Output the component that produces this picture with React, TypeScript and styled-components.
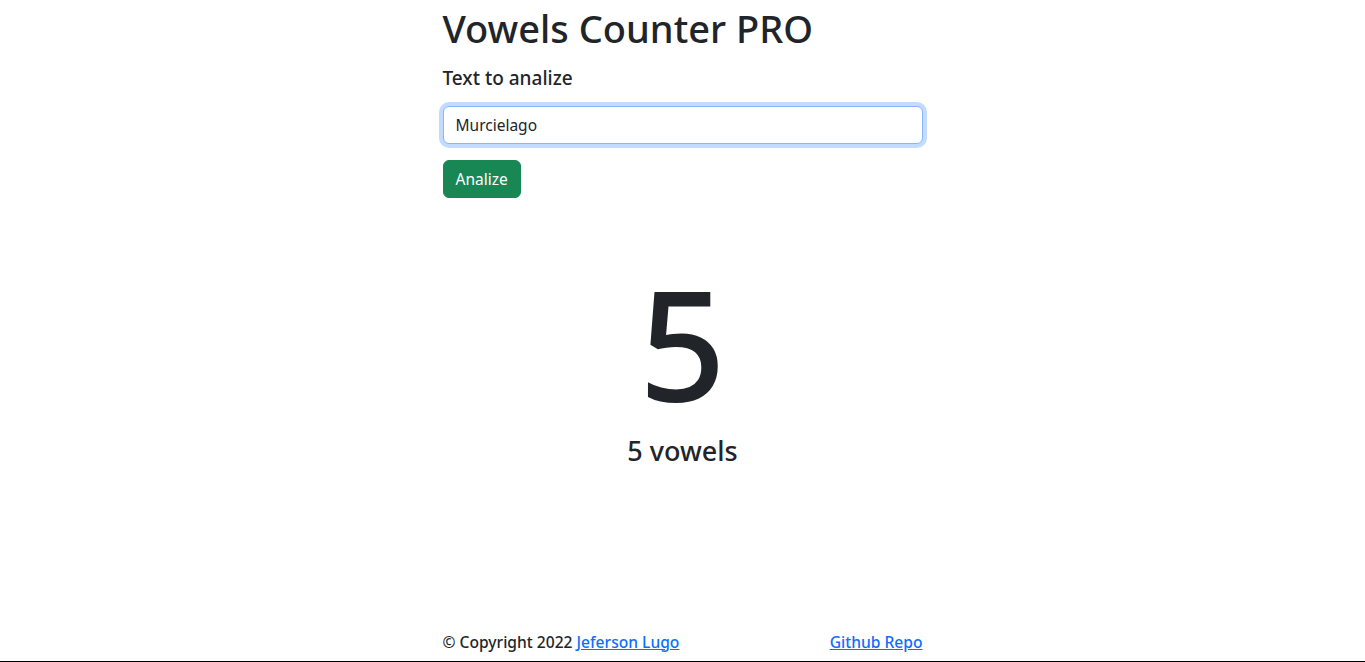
import React, { useState } from "react";
import styled, { createGlobalStyle } from "styled-components";

const GlobalStyle = createGlobalStyle`
  * { box-sizing: border-box; }
  body {
    margin: 0;
    font-family: "Noto Sans", "Open Sans", sans-serif;
    font-size: 16px;
    line-height: 1.5;
    color: #212529;
    background: #fff;
  }
`;

const Page = styled.div`
  height: 100vh;
  display: flex;
  flex-direction: column;
  border-bottom: 1px solid #000;
`;

const Container = styled.main`
  width: 480px;
  margin: 0 auto;
  flex: 1;
  display: flex;
  flex-direction: column;
`;

const Title = styled.h1`
  margin: 0 0 8px;
  padding-top: 6px;
  font-size: 38px;
  font-weight: 500;
  line-height: 1.2;
`;

const Label = styled.label`
  display: block;
  margin: 0 0 8px;
  padding-top: 7px;
  font-size: 19px;
  font-weight: 500;
  line-height: 1.2;
`;

const Input = styled.input`
  display: block;
  width: 100%;
  height: 38px;
  margin-top: 9px;
  padding: 6px 12px;
  font: inherit;
  font-size: 15.5px;
  color: #212529;
  border: 1px solid #86b7fe;
  border-radius: 6px;
  outline: 0;
  box-shadow: 0 0 0 4px rgba(13, 110, 253, 0.25);
`;

const Button = styled.button`
  align-self: flex-start;
  margin-top: 16px;
  height: 38px;
  padding: 6px 12px;
  font: inherit;
  font-size: 15.5px;
  color: #fff;
  background: #198754;
  border: 1px solid #198754;
  border-radius: 6px;
`;

const Result = styled.section`
  margin-top: 69px;
  text-align: center;
`;

const Count = styled.div`
  font-size: 152px;
  font-weight: 500;
  line-height: 1;
`;

const Caption = styled.h3`
  margin: 16px 0 0;
  font-size: 27px;
  font-weight: 500;
  line-height: 1.2;
`;

const Footer = styled.footer`
  margin-top: auto;
  padding-bottom: 7px;
  display: flex;
  justify-content: space-between;
  font-size: 15.6px;
  font-weight: 500;
`;

const Link = styled.a`
  color: #0d6efd;
  text-decoration: underline;
`;

function countVowels(text: string) {
  return (text.match(/[aeiouáéíóú]/gi) || []).length;
}

export default function App() {
  const [text, setText] = useState("Murcielago");
  const total = countVowels(text);

  return (
    <>
      <GlobalStyle />
      <Page>
        <Container>
          <Title>Vowels Counter PRO</Title>
          <Label htmlFor="text">Text to analize</Label>
          <Input
            id="text"
            value={text}
            onChange={(e) => setText(e.target.value)}
          />
          <Button>Analize</Button>
          <Result>
            <Count>{total}</Count>
            <Caption>{total} vowels</Caption>
          </Result>
          <Footer>
            <span>
              © Copyright 2022 <Link href="#">Jeferson Lugo</Link>
            </span>
            <Link href="#">Github Repo</Link>
          </Footer>
        </Container>
      </Page>
    </>
  );
}
